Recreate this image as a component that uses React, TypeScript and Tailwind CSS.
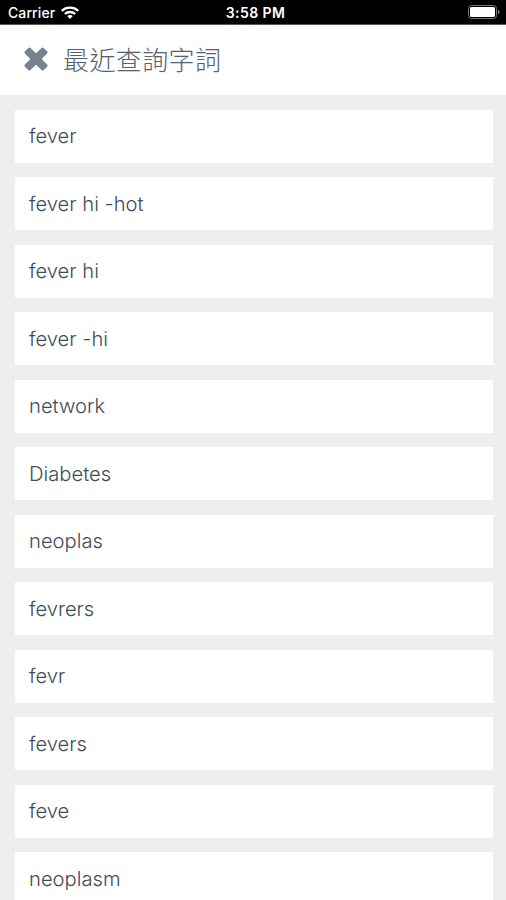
import React from 'react';

const RECENT_TERMS = [
  'fever',
  'fever hi -hot',
  'fever hi',
  'fever -hi',
  'network',
  'Diabetes',
  'neoplas',
  'fevrers',
  'fevr',
  'fevers',
  'feve',
  'neoplasm',
];

const StatusBar: React.FC = () => (
  <div className="h-[25px] shrink-0 bg-black text-white border-b border-[#555] grid grid-cols-3 items-center pl-2 pr-[5px] pt-0.5 font-['Inter','Liberation_Sans',sans-serif] text-[14px] leading-none">
    <div className="flex items-center gap-[6px]">
      <span className="font-medium tracking-[0.1px]">Carrier</span>
      <svg className="-mt-0.5" width="18" height="13" viewBox="0 0 18 13" fill="none" stroke="currentColor" strokeWidth="2.3">
        <path d="M.8 4.8C5.3.6 12.7.6 17.2 4.8" />
        <path d="M3.8 8c2.9-2.7 7.5-2.7 10.4 0" />
        <path d="M6.2 10.1c1.6-1.4 4-1.4 5.6 0L9 12.9z" fill="currentColor" stroke="none" />
      </svg>
    </div>
    <span className="text-center font-semibold tracking-[0.4px] whitespace-nowrap pl-0.5">3:58 PM</span>
    <div className="flex justify-end">
      <svg className="-mt-0.5" width="33" height="14" viewBox="0 0 33 14" fill="none">
        <rect x="0.5" y="0.5" width="28" height="13" rx="3" stroke="#777" />
        <rect x="2" y="2" width="25" height="10" rx="1.5" fill="#fff" />
        <path d="M30 4.8c2.2.8 2.2 3.6 0 4.4z" fill="#777" />
      </svg>
    </div>
  </div>
);

const Header: React.FC = () => (
  <header className="h-[70px] shrink-0 bg-white flex items-center pl-6 text-[#526270]">
    <button aria-label="Close" className="-mt-0.5">
      <svg width="24" height="24" viewBox="0 0 24 24" fill="#74838f" stroke="#74838f" strokeWidth="3" strokeLinejoin="round">
        <path d="M5.4 2L12 8.4 18.6 2 22 5.4 15.6 12 22 18.6 18.6 22 12 15.6 5.4 22 2 18.6 8.4 12 2 5.4z" />
      </svg>
    </button>
    <h1 className="ml-[15px] -mt-0.5 text-[26px] tracking-[0.4px] font-light leading-none font-['Noto_Sans_CJK_TC',sans-serif]">最近查詢字詞</h1>
  </header>
);

const App: React.FC = () => {
  return (
    <div className="h-screen overflow-hidden bg-[#eeeeee] flex flex-col">
      <StatusBar />
      <Header />
      <ul className="flex flex-col gap-[14.5px] pl-[15px] pr-[13px] pt-[14.5px] font-['Inter','Liberation_Sans',sans-serif]">
        {RECENT_TERMS.map((term) => (
          <li key={term} className="h-[53px] shrink-0 bg-white flex items-center px-[14px] pt-px text-[20.2px] font-light text-[#3e4d5a]">
            {term}
          </li>
        ))}
      </ul>
    </div>
  );
};

export default App;
